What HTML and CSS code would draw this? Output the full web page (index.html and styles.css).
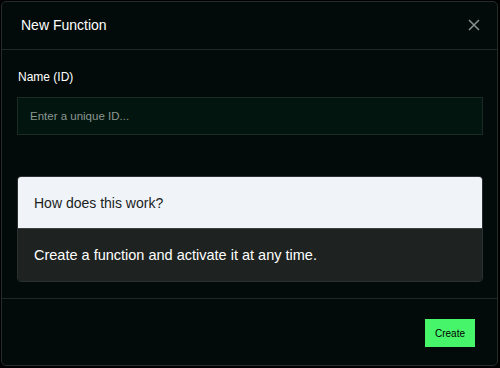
FILE: index.html
```html
<!DOCTYPE html>
<html lang="en">
<head>
<meta charset="UTF-8" />
<title>New Function</title>
<link rel="stylesheet" href="styles.css">
</head>
<body>
<div class="modal">
  <div class="modal-header">
    <div class="modal-title">New Function</div>
    <button class="close-btn" aria-label="Close">
      <svg width="12" height="12" viewBox="0 0 12 12"><path d="M1 1L11 11M11 1L1 11" stroke="#8a918f" stroke-width="1.5" fill="none"/></svg>
    </button>
  </div>
  <div class="modal-body">
    <label class="field-label" for="fn-id">Name (ID)</label>
    <input class="field-input" id="fn-id" type="text" placeholder="Enter a unique ID...">
    <div class="info-card">
      <div class="info-head">How does this work?</div>
      <div class="info-text">Create a function and activate it at any time.</div>
    </div>
  </div>
  <div class="modal-footer">
    <button class="create-btn">Create</button>
  </div>
</div>
</body>
</html>
```

FILE: styles.css
```css
/* общий фон */
html, body {
  margin: 0; padding: 0;
  background: #000;
  font-family: 'Liberation Sans', Arial, sans-serif;
}
body {
  width: 500px;
  height: 368px;
  padding: 1px;
  box-sizing: border-box;
}
.modal {
  width: 497px;
  height: 365px;
  box-sizing: border-box;
  background: #020b09;
  border: 1px solid #262c2b;
  border-radius: 5px;
  display: flex;
  flex-direction: column;
}
.modal-header {
  height: 48px;
  box-sizing: border-box;
  border-bottom: 1px solid #1f2826;
  display: flex;
  align-items: center;
  justify-content: space-between;
  padding: 0 17px 2px 19px;
}
.modal-title {
  color: #fff;
  font-size: 14px;
}
.close-btn {
  background: none;
  border: none;
  padding: 0;
  width: 12px;
  height: 12px;
  display: flex;
  cursor: pointer;
}
.modal-body {
  padding: 17px 14px 16px 15px;
  display: flex;
  flex-direction: column;
}
.field-label {
  color: #fff;
  font-size: 12px;
  line-height: 20px;
  margin-bottom: 10px;
  margin-left: 1px;
}
.field-input {
  height: 38px;
  box-sizing: border-box;
  background: #03150f;
  border: 1px solid #1a2a25;
  color: #fff;
  font-family: inherit;
  font-size: 11.5px;
  padding: 0 12px;
  outline: none;
  margin-bottom: 41px;
}
.field-input::placeholder {
  color: #8b9792;
}
.info-card {
  border: 1px solid #2b3130;
  border-radius: 4px;
  overflow: hidden;
}
.info-head {
  background: #f0f4f8;
  color: #1a1d1c;
  font-size: 14px;
  height: 51px;
  display: flex;
  align-items: center;
  padding: 0 16px;
  border-bottom: 1px solid #3a403e;
}
.info-text {
  background: #1e2321;
  color: #fff;
  font-size: 14.5px;
  height: 52px;
  display: flex;
  align-items: center;
  padding: 0 16px;
}
.modal-footer {
  border-top: 1px solid #1f2826;
  flex: 1;
  display: flex;
  justify-content: flex-end;
  align-items: flex-start;
  padding: 20px 22px 0 0;
}
.create-btn {
  background: #47f56a;
  border: none;
  color: #000;
  font-family: inherit;
  font-size: 10px;
  width: 50px;
  height: 28px;
  padding: 0;
  cursor: pointer;
}
```
